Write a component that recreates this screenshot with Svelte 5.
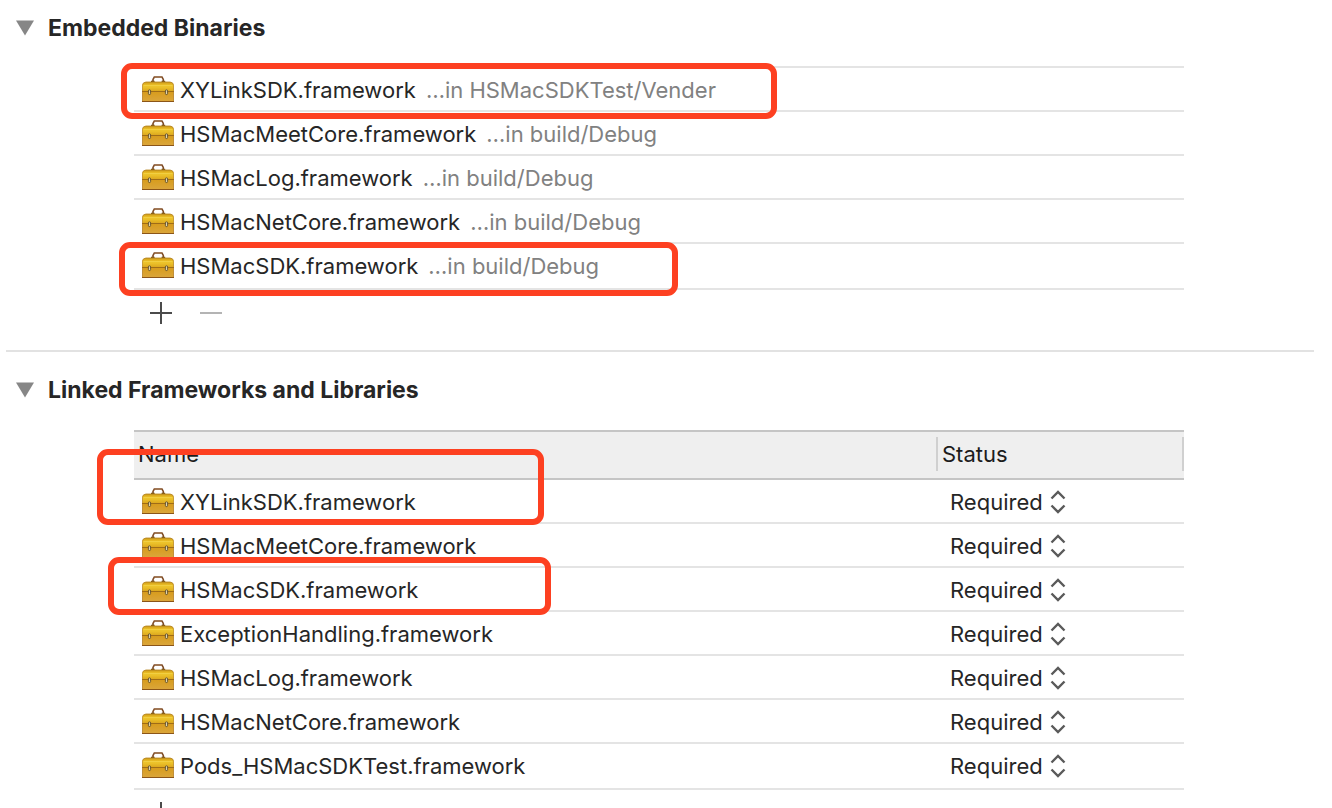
<script>
  const embedded = [
    { name: 'XYLinkSDK.framework', path: '…in HSMacSDKTest/Vender' },
    { name: 'HSMacMeetCore.framework', path: '…in build/Debug' },
    { name: 'HSMacLog.framework', path: '…in build/Debug' },
    { name: 'HSMacNetCore.framework', path: '…in build/Debug' },
    { name: 'HSMacSDK.framework', path: '…in build/Debug' }
  ];
  const linked = [
    'XYLinkSDK.framework',
    'HSMacMeetCore.framework',
    'HSMacSDK.framework',
    'ExceptionHandling.framework',
    'HSMacLog.framework',
    'HSMacNetCore.framework',
    'Pods_HSMacSDKTest.framework'
  ];
  let openEmbedded = $state(true);
  let openLinked = $state(true);
</script>

{#snippet toolbox()}
  <svg class="toolbox" viewBox="0 0 32 26" width="32" height="26" aria-hidden="true">
    <defs>
      <linearGradient id="lid" x1="0" y1="0" x2="0" y2="1">
        <stop offset="0" stop-color="#c8961c" />
        <stop offset="0.25" stop-color="#e6b822" />
        <stop offset="0.5" stop-color="#edc42b" />
        <stop offset="1" stop-color="#dba51d" />
      </linearGradient>
      <linearGradient id="base" x1="0" y1="0" x2="0" y2="1">
        <stop offset="0" stop-color="#d79c1c" />
        <stop offset="1" stop-color="#dba63c" />
      </linearGradient>
    </defs>
    <path d="M11 5.5V3.4L12.3 1H20L21.3 3.4V5.5" fill="none" stroke="#7f4c27" stroke-width="1.6" />
    <path d="M12.3 1.1H20" stroke="#a8774c" stroke-width="0.7" />
    <path d="M9 5.5H12.6M19.6 5.5H23.2" stroke="#6d4a16" stroke-width="1.4" />
    <path d="M0.4 15.5V9.2Q0.8 6.2 4 6H28Q31.2 6.2 31.6 9.2V15.5Z" fill="url(#lid)" stroke="#b5831f" stroke-width="0.8" />
    <path d="M1.5 9.5H30.5" stroke="#f2d046" stroke-width="0.9" />
    <path d="M0.4 15.5H31.6V25.6H0.4Z" fill="url(#base)" stroke="#b07a20" stroke-width="0.8" />
    <path d="M0 15.5H32" stroke="#9c6a16" stroke-width="0.9" />
    <path d="M0 25.5H32" stroke="#8b5518" />
    <rect x="6.4" y="13.8" width="2.2" height="4.8" rx="1.1" fill="#e0d3ab" stroke="#5b4c28" stroke-width="0.9" />
    <rect x="23.4" y="13.8" width="2.2" height="4.8" rx="1.1" fill="#e0d3ab" stroke="#5b4c28" stroke-width="0.9" />
  </svg>
{/snippet}

{#snippet tools()}
  <div class="tools">
    <button type="button" aria-label="Add">
      <svg viewBox="0 0 22 22" width="22" height="22"><path d="M11 0V22M0 11H22" stroke="#4b4b4b" stroke-width="2" /></svg>
    </button>
    <button type="button" aria-label="Remove" disabled>
      <svg viewBox="0 0 22 22" width="22" height="22"><path d="M0 11H22" stroke="#b4b4b4" stroke-width="2" /></svg>
    </button>
  </div>
{/snippet}

{#snippet heading(title, open, toggle)}
  <h2>
    <button type="button" aria-expanded={open} onclick={toggle}>
      <svg class:closed={!open} viewBox="0 0 18 16" width="18" height="16" aria-hidden="true"><path d="M0 0.5H18L9 15.5Z" fill="#868686" /></svg>
      {title}
    </button>
  </h2>
{/snippet}

<main>
  <section class="embedded">
    {@render heading('Embedded Binaries', openEmbedded, () => (openEmbedded = !openEmbedded))}
    {#if openEmbedded}
      <div class="content">
        <ul>
          {#each embedded as item}
            <li>
              {@render toolbox()}
              <span>{item.name}</span>
              <span class="path">{item.path}</span>
            </li>
          {/each}
        </ul>
        {@render tools()}
        <div class="mark mark-vender"></div>
        <div class="mark mark-debug"></div>
      </div>
    {/if}
  </section>

  <section class="linked">
    {@render heading('Linked Frameworks and Libraries', openLinked, () => (openLinked = !openLinked))}
    {#if openLinked}
      <div class="content">
        <table>
          <thead>
            <tr>
              <th scope="col">Name</th>
              <th scope="col" class="status"><div>Status</div></th>
            </tr>
          </thead>
          <tbody>
            {#each linked as name}
              <tr>
                <td><div class="name">{@render toolbox()}<span>{name}</span></div></td>
                <td class="status">
                  <div class="choice">
                    <select aria-label={`Status of ${name}`}>
                      <option>Required</option>
                      <option>Optional</option>
                    </select>
                    <svg viewBox="0 0 16 24" width="16" height="24" aria-hidden="true">
                      <path d="M1.5 8.5L8 2L14.5 8.5M1.5 15.5L8 22L14.5 15.5" fill="none" stroke="#5a5a5a" stroke-width="2.4" />
                    </svg>
                  </div>
                </td>
              </tr>
            {/each}
          </tbody>
        </table>
        {@render tools()}
        <div class="mark mark-first"></div>
        <div class="mark mark-third"></div>
      </div>
    {/if}
  </section>
</main>

<style>
  :global(body) {
    margin: 0;
    background: #fff;
  }
  main {
    box-sizing: border-box;
    height: 100vh;
    overflow-y: auto;
    scrollbar-width: none;
    padding: 0 18px 0 6px;
    font-family: Inter, 'Liberation Sans', sans-serif;
    font-size: 22px;
    line-height: 28px;
    color: #262626;
  }
  .embedded {
    padding: 14px 0 26px;
    border-bottom: 2px solid #e2e2e2;
  }
  .linked {
    padding: 24px 0;
  }
  h2 {
    margin: 0 0 24px;
    font-size: 23px;
    line-height: 28px;
  }
  .linked h2 {
    margin-bottom: 26px;
  }
  button {
    display: block;
    padding: 0;
    border: 0;
    background: none;
    font: inherit;
    color: inherit;
  }
  h2 button {
    display: flex;
    align-items: center;
    gap: 14px;
    padding-left: 10px;
  }
  .closed {
    transform: rotate(-90deg);
  }
  .content {
    position: relative;
    margin: 0 130px 0 128px;
  }
  ul {
    list-style: none;
    margin: 0;
    padding: 0;
    border-top: 2px solid #e4e4e4;
  }
  li,
  .name {
    display: flex;
    align-items: center;
    box-sizing: border-box;
    gap: 6px;
    height: 44px;
    padding-left: 8px;
  }
  li {
    border-bottom: 2px solid #e4e4e4;
  }
  li:last-child {
    height: 46px;
    padding-bottom: 2px;
  }
  .name {
    height: 42px;
  }
  li span,
  .name span {
    padding-top: 2px;
  }
  .toolbox {
    flex: none;
  }
  li .path {
    padding-left: 4px;
    color: #818181;
  }
  .tools {
    display: flex;
    gap: 28px;
    padding: 12px 16px 0;
  }
  .tools svg,
  .choice svg {
    display: block;
  }
  table {
    width: 100%;
    border-collapse: separate;
    border-spacing: 0;
    table-layout: fixed;
  }
  th,
  td {
    padding: 0;
    text-align: left;
    font-weight: 400;
  }
  th {
    height: 44px;
    padding: 0 0 2px 4px;
    background: #efefef;
    border: solid #c5c5c5;
    border-width: 2px 0;
    color: #1c1c1c;
  }
  .status {
    width: 248px;
  }
  th.status {
    width: 248px;
    padding: 0 0 2px;
  }
  th div {
    box-sizing: border-box;
    padding: 3px 4px;
    border: solid #d0d0d0;
    border-width: 0 2px;
  }
  td {
    border-bottom: 2px solid #e4e4e4;
  }
  tr:last-child td {
    padding-bottom: 2px;
  }
  .choice {
    display: grid;
    width: 116px;
    margin-left: 14px;
    padding-top: 2px;
    align-items: center;
  }
  .choice select {
    grid-area: 1 / 1;
    appearance: none;
    width: 100%;
    height: 28px;
    margin: 0;
    padding: 0;
    border: 0;
    background: none;
    font: inherit;
    color: inherit;
  }
  .choice svg {
    grid-area: 1 / 1;
    justify-self: end;
    pointer-events: none;
  }
  .mark {
    position: absolute;
    box-sizing: border-box;
    border: 6px solid #fd4021;
    border-radius: 11px;
    pointer-events: none;
  }
  .mark-vender {
    left: -13px;
    top: -3px;
    width: 656px;
    height: 56px;
  }
  .mark-debug {
    left: -15px;
    top: 176px;
    width: 559px;
    height: 54px;
  }
  .mark-first {
    left: -37px;
    top: 19px;
    width: 447px;
    height: 76px;
  }
  .mark-third {
    left: -26px;
    top: 127px;
    width: 443px;
    height: 58px;
  }
</style>
